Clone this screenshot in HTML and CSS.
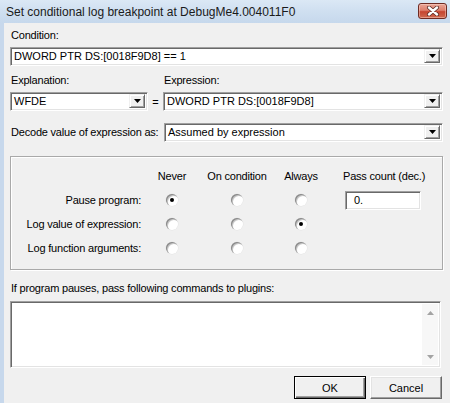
FILE: index.html
```html
<!DOCTYPE html>
<html>
<head>
<meta charset="utf-8">
<link rel="stylesheet" href="styles.css">
</head>
<body>
<div class="window">
  <div class="titlebar">
    <span class="title">Set conditional log breakpoint at DebugMe4.004011F0</span>
    <span class="close">
      <svg width="18" height="10" viewBox="0 0 18 10">
        <path d="M5 1.5 L13 8.5 M13 1.5 L5 8.5" stroke="#5a2a24" stroke-width="4" stroke-linecap="round"/>
        <path d="M5 1.5 L13 8.5 M13 1.5 L5 8.5" stroke="#ffffff" stroke-width="2.4" stroke-linecap="round"/>
      </svg>
    </span>
  </div>
  <div class="client">
    <div class="label l-cond">Condition:</div>
    <div class="combo c-cond">
      <span class="combo-text">DWORD PTR DS:[0018F9D8] == 1</span>
      <span class="combo-btn"><svg width="7" height="4" viewBox="0 0 7 4"><path d="M0 0 H7 L3.5 4 Z" fill="#000"/></svg></span>
    </div>

    <div class="row-labels">
      <div class="label l-expl">Explanation:</div>
      <div class="label l-expr">Expression:</div>
    </div>
    <div class="row-combos">
      <div class="combo c-expl">
        <span class="combo-text">WFDE</span>
        <span class="combo-btn"><svg width="7" height="4" viewBox="0 0 7 4"><path d="M0 0 H7 L3.5 4 Z" fill="#000"/></svg></span>
      </div>
      <span class="eq">=</span>
      <div class="combo c-expr">
        <span class="combo-text">DWORD PTR DS:[0018F9D8]</span>
        <span class="combo-btn"><svg width="7" height="4" viewBox="0 0 7 4"><path d="M0 0 H7 L3.5 4 Z" fill="#000"/></svg></span>
      </div>
    </div>

    <div class="row-decode">
      <div class="label l-decode">Decode value of expression as:</div>
      <div class="combo c-decode">
        <span class="combo-text">Assumed by expression</span>
        <span class="combo-btn"><svg width="7" height="4" viewBox="0 0 7 4"><path d="M0 0 H7 L3.5 4 Z" fill="#000"/></svg></span>
      </div>
    </div>

    <div class="group">
      <div class="grid">
        <div></div>
        <div class="hdr">Never</div>
        <div class="hdr">On condition</div>
        <div class="hdr">Always</div>
        <div class="hdr hdr-pass">Pass count (dec.)</div>

        <div class="rowlabel">Pause program:</div>
        <div class="cell"><span class="radio checked"></span></div>
        <div class="cell"><span class="radio"></span></div>
        <div class="cell"><span class="radio"></span></div>
        <div class="cell-pass"><div class="edit">0.</div></div>

        <div class="rowlabel">Log value of expression:</div>
        <div class="cell"><span class="radio"></span></div>
        <div class="cell"><span class="radio"></span></div>
        <div class="cell"><span class="radio checked"></span></div>
        <div></div>

        <div class="rowlabel">Log function arguments:</div>
        <div class="cell"><span class="radio"></span></div>
        <div class="cell"><span class="radio"></span></div>
        <div class="cell"><span class="radio"></span></div>
        <div></div>
      </div>
    </div>

    <div class="label l-plugins">If program pauses, pass following commands to plugins:</div>
    <div class="memo">
      <div class="memo-area"></div>
      <div class="scrollbar">
        <svg width="7" height="4" viewBox="0 0 7 4"><path d="M0 4 H7 L3.5 0 Z" fill="#a3a3a3"/></svg>
        <svg width="7" height="4" viewBox="0 0 7 4"><path d="M0 0 H7 L3.5 4 Z" fill="#a3a3a3"/></svg>
      </div>
    </div>

    <div class="buttons">
      <div class="btn btn-default">OK</div>
      <div class="btn">Cancel</div>
    </div>
  </div>
</div>
</body>
</html>
```
FILE: styles.css
```css
html, body {
  margin: 0;
  padding: 0;
  width: 450px;
  height: 403px;
  overflow: hidden;
  background: #f0f0f0;
}

.window {
  width: 450px;
  height: 403px;
  display: flex;
  flex-direction: column;
  font-family: "Liberation Sans", Arial, sans-serif;
  font-size: 11px;
  color: #000;
}

.titlebar {
  height: 23px;
  box-sizing: border-box;
  display: flex;
  align-items: center;
  justify-content: space-between;
  background: linear-gradient(to bottom, #dbe8f5 0%, #cfdff0 50%, #c6d8ec 100%);
  padding: 0 3px 1px 6px;
}

.title {
  font-size: 12px;
  color: #1a1a1a;
  margin-top: 1px;
}

.close {
  width: 29px;
  height: 16px;
  box-sizing: border-box;
  border: 1px solid #6e2b23;
  border-radius: 3px;
  background: linear-gradient(to bottom, #e9a597 0%, #dd7f6d 45%, #c54530 55%, #cf6a50 100%);
  display: flex;
  align-items: center;
  justify-content: center;
  margin-top: -1px;
  box-shadow: inset 0 0 0 1px rgba(255, 220, 210, 0.45);
}

.client {
  flex: 1;
  background: #f0f0f0;
  border-left: 4px solid #c7d8ec;
  padding: 6px 7px 0 6px;
  display: flex;
  flex-direction: column;
}

.label {
  line-height: 13px;
  height: 13px;
  padding-left: 1px;
  white-space: nowrap;
  letter-spacing: -0.2px;
}

.combo {
  display: flex;
  height: 19px;
  box-sizing: border-box;
  background: #fff;
  border: 1px solid;
  border-color: #a0a0a0 #ffffff #ffffff #a0a0a0;
  box-shadow: inset 1px 1px 0 #696969, inset -1px -1px 0 #e3e3e3;
  padding: 1px 2px 2px 1px;
}

.combo-text {
  flex: 1;
  padding-left: 2px;
  line-height: 14px;
  font-size: 11px;
  white-space: nowrap;
  overflow: hidden;
}

.combo-btn {
  width: 16px;
  box-sizing: border-box;
  background: #f0f0f0;
  border: 1px solid;
  border-color: #f0f0f0 #696969 #696969 #f0f0f0;
  box-shadow: inset 1px 1px 0 #fff, inset -1px -1px 0 #a0a0a0;
  display: flex;
  align-items: center;
  justify-content: center;
}

.l-cond { margin-top: 0; }
.c-cond { margin-top: 5px; }

.row-labels {
  display: flex;
  margin-top: 8px;
}
.l-expl { width: 152px; }

.row-combos {
  display: flex;
  align-items: center;
  margin-top: 5px;
}
.c-expl { width: 138px; }
.eq {
  width: 15px;
  text-align: center;
  font-size: 11px;
}
.c-expr { flex: 1; }

.row-decode {
  display: flex;
  align-items: center;
  margin-top: 12px;
}
.l-decode { width: 153px; flex: none; }
.c-decode { flex: 1; }

.group {
  margin-top: 14px;
  height: 114px;
  box-sizing: border-box;
  border: 1px solid #a9a9a9;
  box-shadow: 1px 1px 0 #fff, inset 1px 1px 0 #fff;
  padding-top: 7px;
}

.grid {
  display: grid;
  grid-template-columns: 130px 62px 68px 60px auto;
  grid-template-rows: 24px 24px 24px 24px;
  align-items: center;
}

.hdr {
  text-align: center;
  white-space: nowrap;
  letter-spacing: -0.2px;
}
.hdr-pass {
  text-align: left;
  padding-left: 12px;
}

.rowlabel {
  text-align: right;
  white-space: nowrap;
  letter-spacing: -0.2px;
}

.cell {
  display: flex;
  justify-content: center;
  align-items: center;
}

.radio {
  position: relative;
  width: 12px;
  height: 12px;
  border-radius: 50%;
  background: #fff;
  box-shadow: inset 1px 1px 0 #8a8a8a, inset 2px 2px 0 #c8c8c8, 0 0 0 0.5px #e4e4e4;
}
.radio.checked::after {
  content: "";
  position: absolute;
  left: 4px;
  top: 4px;
  width: 4px;
  height: 4px;
  border-radius: 50%;
  background: #000;
}

.cell-pass {
  padding-left: 14px;
}
.edit {
  width: 76px;
  height: 19px;
  box-sizing: border-box;
  background: #fff;
  border: 1px solid;
  border-color: #a0a0a0 #ffffff #ffffff #a0a0a0;
  box-shadow: inset 1px 1px 0 #696969, inset -1px -1px 0 #e3e3e3;
  padding-left: 8px;
  line-height: 16px;
}

.l-plugins {
  margin-top: 12px;
}

.memo {
  margin-top: 6px;
  margin-right: 2px;
  height: 67px;
  box-sizing: border-box;
  display: flex;
  background: #fff;
  border: 1px solid;
  border-color: #a0a0a0 #ffffff #ffffff #a0a0a0;
  box-shadow: inset 1px 1px 0 #696969, inset -1px -1px 0 #e3e3e3;
  padding: 2px 2px 2px 2px;
}
.memo-area { flex: 1; }
.scrollbar {
  width: 16px;
  background: #f7f7f7;
  display: flex;
  flex-direction: column;
  justify-content: space-between;
  align-items: center;
  padding: 7px 0 6px;
}

.buttons {
  display: flex;
  justify-content: flex-end;
  gap: 4px;
  margin-top: 8px;
  margin-right: 1px;
}

.btn {
  width: 72px;
  height: 23px;
  box-sizing: border-box;
  border: 1px solid;
  border-color: #ffffff #696969 #696969 #ffffff;
  box-shadow: inset -1px -1px 0 #a0a0a0, inset 1px 1px 0 #e3e3e3;
  background: #f0f0f0;
  display: flex;
  align-items: center;
  justify-content: center;
  font-size: 11px;
}
.btn-default {
  border-color: #000;
  box-shadow: inset 1px 1px 0 #fff, inset -1px -1px 0 #696969, inset -2px -2px 0 #a0a0a0;
}
```
